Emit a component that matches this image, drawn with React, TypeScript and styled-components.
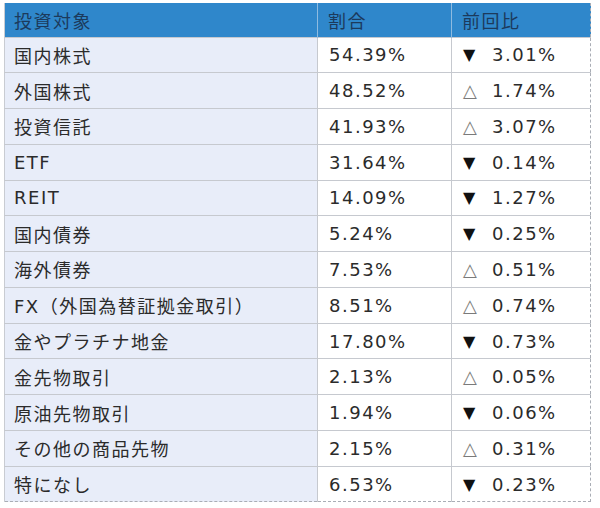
import React from 'react';
import styled, { createGlobalStyle } from 'styled-components';

type Row = {
  name: string,
  share: string,
  diff: string,
  down: boolean,
}

const ROWS: Row[] = [
  { name: '国内株式', share: '54.39%', diff: '3.01%', down: true },
  { name: '外国株式', share: '48.52%', diff: '1.74%', down: false },
  { name: '投資信託', share: '41.93%', diff: '3.07%', down: false },
  { name: 'ETF', share: '31.64%', diff: '0.14%', down: true },
  { name: 'REIT', share: '14.09%', diff: '1.27%', down: true },
  { name: '国内債券', share: '5.24%', diff: '0.25%', down: true },
  { name: '海外債券', share: '7.53%', diff: '0.51%', down: false },
  { name: 'FX（外国為替証拠金取引）', share: '8.51%', diff: '0.74%', down: false },
  { name: '金やプラチナ地金', share: '17.80%', diff: '0.73%', down: true },
  { name: '金先物取引', share: '2.13%', diff: '0.05%', down: false },
  { name: '原油先物取引', share: '1.94%', diff: '0.06%', down: true },
  { name: 'その他の商品先物', share: '2.15%', diff: '0.31%', down: false },
  { name: '特になし', share: '6.53%', diff: '0.23%', down: true },
];

const GlobalStyle = createGlobalStyle`
  body {
    margin: 0;
    background: #ffffff;
    font-family: "DejaVu Sans", "Noto Sans CJK JP", sans-serif;
  }
`;

const App: React.FC = () => {
  return (
    <>
      <GlobalStyle />
      <Wrapper>
        <Table>
          <colgroup>
            <col style={{ width: 313 }} />
            <col style={{ width: 134 }} />
            <col />
          </colgroup>
          <thead>
            <tr>
              <HeadCell>投資対象</HeadCell>
              <HeadCell>割合</HeadCell>
              <HeadCell>前回比</HeadCell>
            </tr>
          </thead>
          <tbody>
            {ROWS.map((row) => (
              <BodyRow key={row.name}>
                <Cell $first>{row.name}</Cell>
                <Cell>{row.share}</Cell>
                <Cell>
                  <Mark $down={row.down}>{row.down ? '▼' : '△'}</Mark>
                  {row.diff}
                </Cell>
              </BodyRow>
            ))}
          </tbody>
        </Table>
      </Wrapper>
    </>
  );
};

const Wrapper = styled.div`
  padding: 3px 0 0 4px;
`;

const Table = styled.table`
  width: 587px;
  border-collapse: collapse;
  table-layout: fixed;
  border-left: 1px solid #c9ccd2;
  border-right: 1px dashed #a9adb5;
  border-bottom: 1px dashed #a9adb5;
  font-size: 18px;
  letter-spacing: 1.5px;
  color: #2b2b2b;
`;

const HeadCell = styled.th`
  height: 34px;
  padding: 0 0 0 10px;
  box-sizing: border-box;
  background: #2f87cb;
  color: #1c3a5c;
  font-weight: normal;
  text-align: left;
  border-left: 1px solid #8fbbe0;
  border-bottom: 1px dashed #d6e6f5;

  &:first-child {
    border-left: none;
    padding-left: 9px;
  }
`;

const BodyRow = styled.tr`
  height: 35.77px;
`;

const Cell = styled.td<{ $first?: boolean }>`
  padding: 0 0 0 ${(p) => (p.$first ? '9px' : '11px')};
  background: ${(p) => (p.$first ? '#e8edf9' : '#ffffff')};
  border-top: 1px solid #c6c9cf;
  border-left: 1px solid #c6c9cf;
  white-space: nowrap;

  &:first-child {
    border-left: none;
  }
`;

const Mark = styled.span<{ $down: boolean }>`
  display: inline-block;
  width: 29px;
  font-size: ${(p) => (p.$down ? '16px' : '18px')};
  letter-spacing: 0;
  color: ${(p) => (p.$down ? '#111111' : '#7a7a7a')};
  vertical-align: ${(p) => (p.$down ? '1px' : '0')};
`;

export default App;
